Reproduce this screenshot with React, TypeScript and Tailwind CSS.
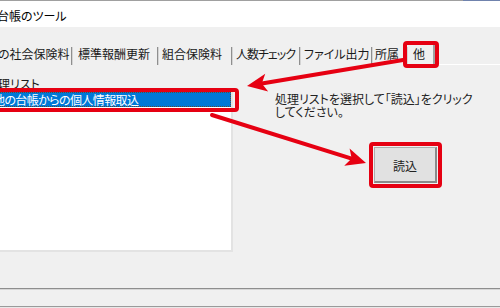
const RED = "#e60012";

const tabs = [
  { label: "他の社会保険料", cls: "ml-[-20px] w-[92px] pl-[6px]" },
  { label: "標準報酬更新", cls: "w-[86px] pl-[6px]" },
  { label: "組合保険料", cls: "w-[74px] pl-[4px]" },
  { label: "人数チェック", cls: "w-[68px] pl-[4px] tracking-[-1px]" },
  { label: "ファイル出力", cls: "w-[72px] pl-[4px]" },
  { label: "所属", cls: "w-[35px] pl-[3px]" },
];

function Arrow({ x1, y1, x2, y2 }: { x1: number; y1: number; x2: number; y2: number }) {
  const len = Math.hypot(x2 - x1, y2 - y1);
  const ux = (x2 - x1) / len;
  const uy = (y2 - y1) / len;
  const head = 20;
  const half = 9;
  const bx = x2 - ux * head;
  const by = y2 - uy * head;
  const nx = x2 - ux * (head - 5);
  const ny = y2 - uy * (head - 5);
  const pts = [
    [x2, y2],
    [bx - uy * half, by + ux * half],
    [nx, ny],
    [bx + uy * half, by - ux * half],
  ]
    .map((p) => p.join(","))
    .join(" ");
  return (
    <g>
      <line x1={x1} y1={y1} x2={nx} y2={ny} stroke={RED} strokeWidth={4} strokeLinecap="round" />
      <polygon points={pts} fill={RED} />
    </g>
  );
}

export default function App() {
  return (
    <div className="relative h-[308px] w-[500px] overflow-hidden bg-[#f0f0f0] font-['Noto_Sans_CJK_JP','Noto_Sans',sans-serif] text-[12px] text-[#1a1a1a] [font-feature-settings:'palt']">
      {/* window top edge */}
      <div className="flex h-px">
        <div className="flex-1 bg-[#a0a0a0]" />
        <div className="w-[37px] bg-[#7083ad]" />
      </div>

      {/* title bar */}
      <div className="flex h-[26px] items-center bg-white pt-[3px]">
        <span className="ml-[-3px] leading-[14px] text-black">台帳のツール</span>
      </div>

      {/* tab strip */}
      <div className="mt-[17px] flex h-[21px] items-end">
        {tabs.map((t) => (
          <div
            key={t.label}
            className={`h-[18px] shrink-0 border-r border-[#8f8f8f] leading-[14px] whitespace-nowrap shadow-[1px_0_0_#d4d4d4] ${t.cls}`}
          >
            {t.label}
          </div>
        ))}
        <div className="h-[20px] w-[28px] shrink-0 border-r-2 border-[#a0a0a0] pl-[6px] pt-[2px] leading-[14px]">
          他
        </div>
        <div className="h-full flex-1 border-b border-white" />
      </div>

      {/* panel */}
      <div className="flex pt-[11px]">
        <div className="ml-[-14px] flex w-[247px] shrink-0 flex-col">
          <div className="h-[15px] leading-[15px]">処理リスト</div>
          <div className="h-[161px] border-2 border-t border-l border-[#e3e3e3] bg-white">
            <div className="h-[15px] border border-dotted border-[#5a4a3a] bg-[#0078d7] pl-[5px] leading-[13px] tracking-[-0.6px] whitespace-nowrap text-white">
              他の台帳からの個人情報取込
            </div>
          </div>
        </div>

        <div className="ml-[42px] flex flex-col pt-[16px]">
          <p className="leading-[13px] whitespace-nowrap text-[#222]">
            処理リストを選択して「読込」をクリック
            <br />
            してください。
          </p>
          <button className="mt-[29px] ml-[99px] flex h-[36px] w-[63px] items-center justify-center border border-r-2 border-b-2 border-[#adadad] border-r-[#8a8a8a] border-b-[#8a8a8a] bg-[#e1e1e1] pt-[2px] text-[12px] text-[#222]">
            読込
          </button>
        </div>
      </div>

      {/* window bottom edge */}
      <div className="absolute inset-x-0 top-[288px] h-px bg-[#8e8e8e]" />
      <div className="absolute inset-x-0 top-[289px] h-px bg-[#d6d6d6]" />
      <div className="absolute inset-x-0 top-[306px] h-[2px] border-t border-[#9a9a9a] bg-[#e8e8e8]" />

      {/* annotations */}
      <svg className="pointer-events-none absolute inset-0" width={500} height={308}>
        <rect x={405} y={43} width={32} height={23} rx={2} fill="none" stroke={RED} strokeWidth={4} />
        <rect x={-10} y={90} width={247} height={20} rx={2} fill="none" stroke={RED} strokeWidth={4} />
        <rect x={371} y={144} width={69} height={42} rx={2} fill="none" stroke={RED} strokeWidth={4} />
        <Arrow x1={403} y1={60} x2={247} y2={86} />
        <Arrow x1={212} y1={115} x2={366} y2={163} />
      </svg>
    </div>
  );
}
